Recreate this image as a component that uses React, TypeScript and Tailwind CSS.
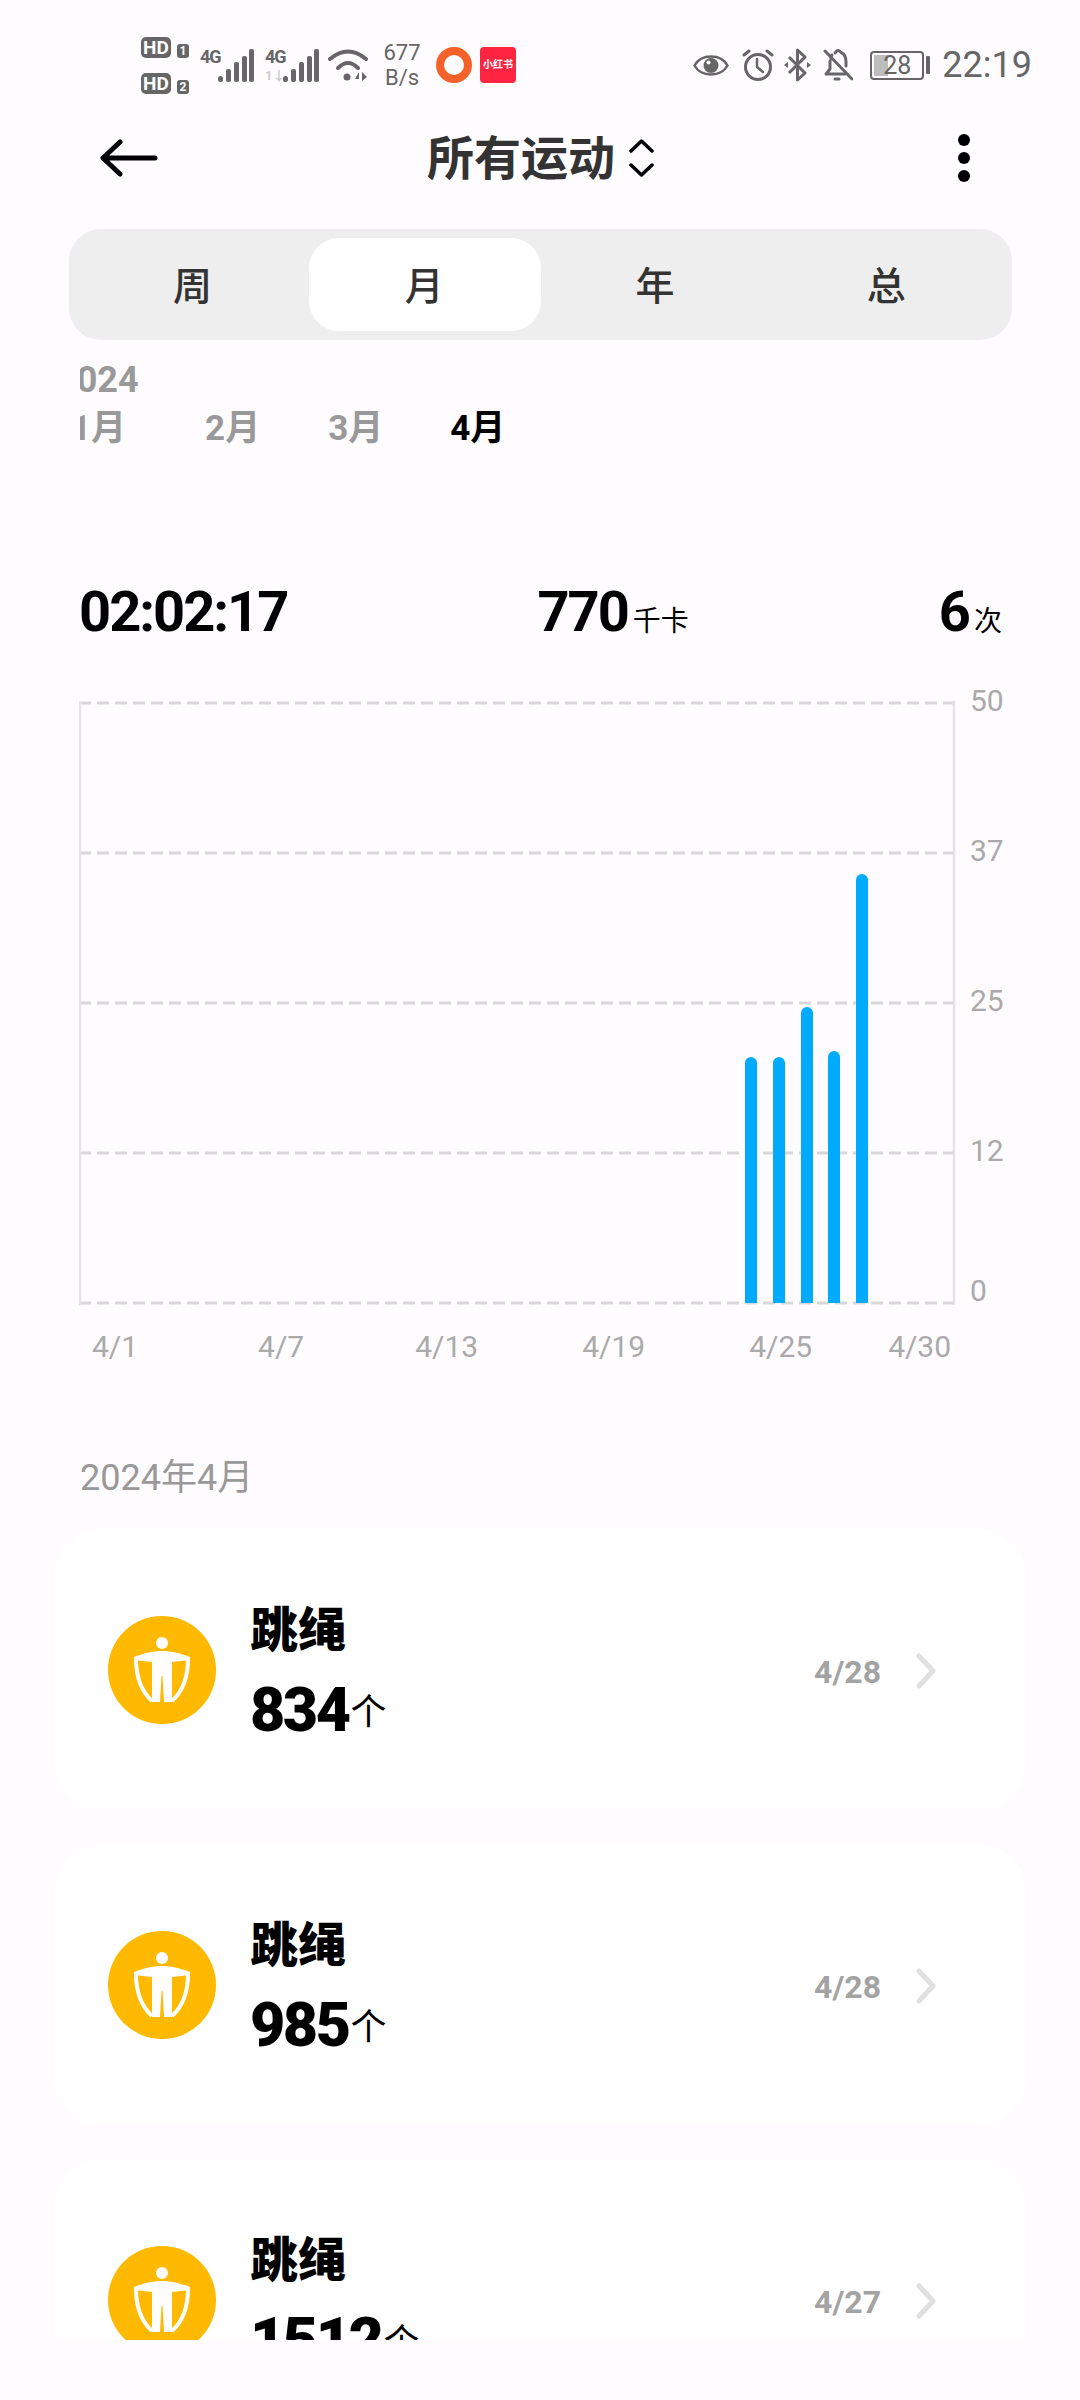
// ── Status bar ────────────────────────────────────────────────

function SimBadge({ n }: { n: string }) {
  return (
    <div className="flex items-end gap-[6px]">
      <span className="flex h-[21px] w-[30px] items-center justify-center rounded-[5px] bg-[#666] text-[19px] leading-none font-bold text-white">
        HD
      </span>
      <span className="flex h-[14px] w-[12px] items-center justify-center rounded-[3px] bg-[#666] text-[12px] leading-none font-bold text-white">
        {n}
      </span>
    </div>
  );
}

function Signal({ data }: { data?: boolean }) {
  return (
    <div className="relative h-[33px] w-[54px]">
      <span className="absolute top-0 left-0 text-[18px] leading-[16px] font-bold tracking-[-1px] text-[#666]">4G</span>
      {data && <span className="absolute bottom-0 left-0 text-[13px] leading-[12px] font-bold text-[#ccc]">1↓</span>}
      <svg width="54" height="33" viewBox="0 0 54 33" fill="#666">
        <rect x="18" y="27" width="5" height="6" rx="2.5" />
        <rect x="26" y="20" width="5" height="13" rx="2" />
        <rect x="34" y="13" width="5" height="20" rx="2" />
        <rect x="42" y="7" width="5" height="26" rx="2" />
        <rect x="49" y="0" width="5" height="33" rx="2" />
      </svg>
    </div>
  );
}

function StatusBar() {
  return (
    <div className="flex h-[130px] items-center pr-[48px] pl-[141px] text-[#666]">
      <div className="flex flex-col gap-[15px]">
        <SimBadge n="1" />
        <SimBadge n="2" />
      </div>
      <div className="ml-[11px]">
        <Signal />
      </div>
      <div className="ml-[11px]">
        <Signal data />
      </div>
      <svg className="ml-[9px]" width="40" height="33" viewBox="0 0 40 33" fill="none" stroke="#666" strokeLinecap="round">
        <path d="M2 10Q20 -5 38 10" strokeWidth="4" />
        <path d="M10 19Q20 9 30 19" strokeWidth="4" />
        <circle cx="19" cy="28" r="3.500" fill="#666" stroke="none" />
        <path d="M31 23L27 30H31ZM34 23V32L39 28Z" fill="#666" stroke="none" />
      </svg>
      <div className="ml-[15px] flex w-[38px] flex-col items-center text-[22px] leading-[25px] text-[#666]">
        <span>677</span>
        <span>B/s</span>
      </div>
      <div className="ml-[15px] h-[36px] w-[36px] rounded-full border-[8px] border-[#f4622a]" />
      <div className="ml-[8px] flex h-[36px] w-[36px] items-center justify-center rounded-[4px] bg-[#ff2442] text-[10px] leading-none font-bold whitespace-nowrap text-white">
        小红书
      </div>

      <svg className="ml-auto" width="36" height="27" viewBox="0 0 36 27" fill="none" stroke="#666">
        <path d="M1.500 13.500C8 1.500 28 1.500 34.500 13.500C28 25.500 8 25.500 1.500 13.500Z" strokeWidth="2.500" />
        <circle cx="18" cy="13.500" r="7.500" fill="#666" stroke="none" />
        <circle cx="15.500" cy="10.500" r="2" fill="#fff" stroke="none" />
      </svg>
      <svg className="ml-[13px]" width="32" height="32" viewBox="0 0 32 32" fill="none" stroke="#666" strokeWidth="3" strokeLinecap="round" strokeLinejoin="round">
        <circle cx="16" cy="18" r="12.500" />
        <path d="M15 10V18L21 23" strokeWidth="2.500" />
        <path d="M2 6L7 2M30 6L25 2" />
      </svg>
      <svg className="ml-[10px]" width="27" height="34" viewBox="0 0 27 34" fill="none" stroke="#666" strokeWidth="3">
        <path d="M5 9L21 25L13.500 32V2L21 9L5 25" strokeLinejoin="round" />
        <path d="M0 17L4 14V20ZM27 17L23 14V20Z" fill="#666" stroke="none" />
      </svg>
      <svg className="ml-[12px]" width="30" height="32" viewBox="0 0 30 32" fill="none" stroke="#666" strokeWidth="3" strokeLinecap="round" strokeLinejoin="round">
        <path d="M8 10C8 8 8 7 9 6M12 4C13 3 13 1.500 15 1.500C17 1.500 17 3 18 3.500C22 5 23 9 23 13V17" />
        <path d="M7 12V20L3 25H22" />
        <path d="M12 30H16" />
        <path d="M2 2L29 30" />
      </svg>
      <div className="relative ml-[17px] flex h-[29px] w-[54px] items-center justify-center rounded-[4px] border-2 border-[#666]">
        <div className="absolute top-[2px] bottom-[2px] left-[2px] w-[14px] bg-[#bdbdbd]" />
        <span className="relative text-[25px] leading-none text-[#666]">28</span>
      </div>
      <div className="ml-[2px] h-[18px] w-[4px] rounded-[1px] bg-[#666]" />
      <span className="ml-[12px] text-[36px] leading-none text-[#666]">22:19</span>
    </div>
  );
}

// ── Nav ───────────────────────────────────────────────────────

function NavBar() {
  return (
    <div className="flex h-[56px] items-center pl-[100px]">
      <svg width="58" height="38" viewBox="0 0 58 38" fill="none" stroke="#000" strokeWidth="5" strokeLinecap="round" strokeLinejoin="round">
        <path d="M20 3L3 19L20 35M3 19H55" />
      </svg>
      <span className="ml-[269px] w-[188px] text-[47px] leading-none font-bold whitespace-nowrap text-[#333]">所有运动</span>
      <svg className="ml-[14px]" width="25" height="40" viewBox="0 0 25 40" fill="none" stroke="#000" strokeWidth="3.500" strokeLinecap="round" strokeLinejoin="round">
        <path d="M2 13L12.500 3L23 13M2 27L12.500 37L23 27" />
      </svg>
      <svg className="ml-[304px]" width="12" height="48" viewBox="0 0 12 48" fill="#000">
        <circle cx="6" cy="6" r="6" />
        <circle cx="6" cy="24" r="6" />
        <circle cx="6" cy="42" r="6" />
      </svg>
    </div>
  );
}

// ── Tabs ──────────────────────────────────────────────────────

const TABS = ["周", "月", "年", "总"];

function Tabs() {
  return (
    <div className="mt-[43px] ml-[69px] grid h-[111px] w-[943px] grid-cols-4 rounded-[32px] bg-[#eeeeee] p-[9px]">
      {TABS.map((t) => (
        <div
          key={t}
          className={
            t === "月"
              ? "flex items-center justify-center rounded-[30px] bg-white pt-[5px] pr-[1px] text-[39px] leading-none font-medium text-[#333]"
              : "flex items-center justify-center pt-[5px] pr-[2px] text-[39px] leading-none font-medium text-[#333]"
          }
        >
          {t}
        </div>
      ))}
    </div>
  );
}

function MonthPicker() {
  return (
    <div className="mt-[20px] ml-[80px] w-[500px] overflow-hidden">
      <div className="-ml-[24px] text-[36px] leading-[40px] font-bold text-[#999]">2024</div>
      <div className="mt-[8px] -ml-[9px] flex h-[40px] items-center text-[35px] leading-none font-bold whitespace-nowrap text-[#999]">
        <span>1月</span>
        <span className="ml-[79px]">2月</span>
        <span className="ml-[68px]">3月</span>
        <span className="ml-[67px] text-black">4月</span>
      </div>
    </div>
  );
}

// ── Stats ─────────────────────────────────────────────────────

function Stats() {
  return (
    <div className="mt-[134px] flex h-[60px] items-baseline justify-between pr-[78px] pl-[79px] font-bold text-black">
      <span className="text-[56px] leading-[60px] tracking-[-2px]">02:02:17</span>
      <span className="text-[56px] leading-[60px] tracking-[-2px]">
        770<span className="ml-[5px] text-[28px] font-normal tracking-normal">千卡</span>
      </span>
      <span className="text-[56px] leading-[60px] tracking-[-2px]">
        6<span className="ml-[5px] text-[28px] font-normal tracking-normal">次</span>
      </span>
    </div>
  );
}

// ── Chart ─────────────────────────────────────────────────────

const BARS = [
  { x: 666, top: 356 },
  { x: 694, top: 356 },
  { x: 722, top: 306 },
  { x: 749, top: 350 },
  { x: 777, top: 173 },
];

const GRID_Y = [2, 152, 302, 452, 602];

const XLABELS = [
  { text: "4/1", cls: "ml-[92px]" },
  { text: "4/7", cls: "ml-[120px]" },
  { text: "4/13", cls: "ml-[111px]" },
  { text: "4/19", cls: "ml-[104px]" },
  { text: "4/25", cls: "ml-[104px]" },
  { text: "4/30", cls: "ml-[76px]" },
];

function Chart() {
  return (
    <div>
      <div className="mt-[59px] flex pl-[79px]">
        <svg width="877" height="604" viewBox="0 0 877 604" fill="none">
          {GRID_Y.map((y) => (
            <line key={y} x1="0" x2="876" y1={y} y2={y} stroke="#d8d8d8" strokeWidth="3" strokeDasharray="12 6" />
          ))}
          <line x1="1" x2="1" y1="0" y2="604" stroke="#e3e3e3" strokeWidth="2.500" />
          <line x1="875" x2="875" y1="0" y2="604" stroke="#e3e3e3" strokeWidth="2.500" />
          {BARS.map((b) => (
            <path
              key={b.x}
              d={`M${b.x} 602V${b.top + 6}a6 6 0 0 1 12 0V602Z`}
              fill="#00aaff"
            />
          ))}
        </svg>
        <div className="-mt-[15px] ml-[14px] text-[30px] leading-[30px] text-[#aaa]">
          <div className="h-[150px]">50</div>
          <div className="h-[150px]">37</div>
          <div className="h-[150px]">25</div>
          <div className="h-[140px]">12</div>
          <div>0</div>
        </div>
      </div>
      <div className="mt-[26px] flex text-[30px] leading-[30px] text-[#aaa]">
        {XLABELS.map((l) => (
          <span key={l.text} className={l.cls}>
            {l.text}
          </span>
        ))}
      </div>
    </div>
  );
}

// ── Workout list ──────────────────────────────────────────────

function RopeIcon() {
  return (
    <svg className="shrink-0" width="108" height="108" viewBox="0 0 108 108">
      <circle cx="54" cy="54" r="54" fill="#ffb900" />
      <circle cx="54" cy="27" r="6" fill="#fff" />
      <path
        d="M54 35C46 35 36 37 26 41V44L44 46V86H52L53.500 60H54.500L56 86H64V46L82 44V41C72 37 62 35 54 35Z"
        fill="#fff"
      />
      <path d="M28 43C28 60 33 75 44 85M80 43C80 60 75 75 64 85" fill="none" stroke="#fff" strokeWidth="4" />
    </svg>
  );
}

const RECORDS = [
  { value: "834", date: "4/28" },
  { value: "985", date: "4/28" },
  { value: "1512", date: "4/27" },
];

function RecordCard({ value, date }: { value: string; date: string }) {
  return (
    <div className="flex h-[280px] w-[970px] shrink-0 items-center rounded-[44px] bg-white pr-[89px] pl-[53px]">
      <RopeIcon />
      <div className="ml-[34px] flex flex-col pt-[5px] text-black">
        <span className="text-[48px] leading-[50px] font-black">跳绳</span>
        <span className="mt-[24px] flex items-end text-[61px] leading-[60px] font-black tracking-[-2.500px]">
          {value}
          <span className="ml-[2px] text-[36px] leading-[54px] font-normal tracking-normal">个</span>
        </span>
      </div>
      <span className="mt-[4px] ml-auto text-[32px] leading-none font-bold text-[#a3a3a3]">{date}</span>
      <svg className="mt-[2px] ml-[35px]" width="20" height="36" viewBox="0 0 20 36" fill="none" stroke="#e0e0e0" strokeWidth="5" strokeLinecap="round" strokeLinejoin="round">
        <path d="M3 3L17 18L3 33" />
      </svg>
    </div>
  );
}

export default function App() {
  return (
    <div className="h-[2400px] w-[1080px] overflow-hidden bg-[#fefcff] font-[Roboto,'Noto_Sans_CJK_SC',sans-serif]">
      <StatusBar />
      <NavBar />
      <Tabs />
      <MonthPicker />
      <Stats />
      <Chart />
      <div className="mt-[96px] ml-[80px] text-[36px] leading-[40px] text-[#999]">2024年4月</div>
      <div className="mt-[32px] ml-[55px] flex h-[810px] flex-col gap-[35px] overflow-hidden">
        {RECORDS.map((r) => (
          <RecordCard key={r.value} value={r.value} date={r.date} />
        ))}
      </div>
    </div>
  );
}
